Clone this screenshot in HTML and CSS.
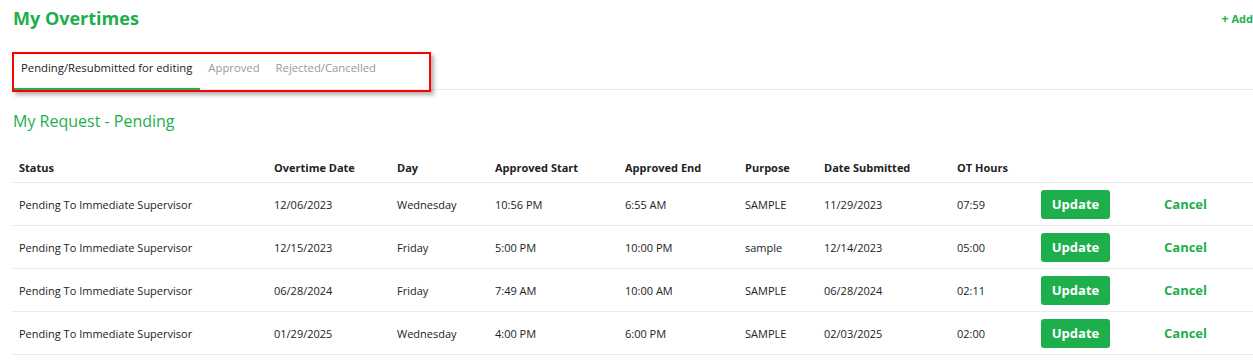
FILE: index.html
```html
<!DOCTYPE html>
<html lang="en">
<head>
  <meta charset="UTF-8">
  <title>My Overtimes</title>
  <meta name="viewport" content="width=device-width, initial-scale=1.0">
  <link rel="stylesheet" href="styles.css">
</head>
<body>

  <div class="page-head">
    <h1>My Overtimes</h1>
    <a class="add-link" href="#"><span class="plus">+</span> Add</a>
  </div>

  <div class="tabs-row">
    <div class="tabs-box">
      <a class="tab active" href="#">Pending/Resubmitted for editing</a>
      <a class="tab" href="#">Approved</a>
      <a class="tab" href="#">Rejected/Cancelled</a>
    </div>
  </div>

  <h2>My Request - Pending</h2>

  <table class="ot-table">
    <colgroup>
      <col style="width:255px">
      <col style="width:123px">
      <col style="width:98px">
      <col style="width:130px">
      <col style="width:120px">
      <col style="width:79px">
      <col style="width:133px">
      <col style="width:84px">
      <col style="width:123px">
      <col>
    </colgroup>
    <thead>
      <tr>
        <th>Status</th>
        <th>Overtime Date</th>
        <th>Day</th>
        <th>Approved Start</th>
        <th>Approved End</th>
        <th>Purpose</th>
        <th>Date Submitted</th>
        <th>OT Hours</th>
        <th></th>
        <th></th>
      </tr>
    </thead>
    <tbody>
      <tr>
        <td>Pending To Immediate Supervisor</td>
        <td>12/06/2023</td>
        <td>Wednesday</td>
        <td>10:56 PM</td>
        <td>6:55 AM</td>
        <td>SAMPLE</td>
        <td>11/29/2023</td>
        <td>07:59</td>
        <td><button class="btn-update">Update</button></td>
        <td><a class="cancel" href="#">Cancel</a></td>
      </tr>
      <tr>
        <td>Pending To Immediate Supervisor</td>
        <td>12/15/2023</td>
        <td>Friday</td>
        <td>5:00 PM</td>
        <td>10:00 PM</td>
        <td>sample</td>
        <td>12/14/2023</td>
        <td>05:00</td>
        <td><button class="btn-update">Update</button></td>
        <td><a class="cancel" href="#">Cancel</a></td>
      </tr>
      <tr>
        <td>Pending To Immediate Supervisor</td>
        <td>06/28/2024</td>
        <td>Friday</td>
        <td>7:49 AM</td>
        <td>10:00 AM</td>
        <td>SAMPLE</td>
        <td>06/28/2024</td>
        <td>02:11</td>
        <td><button class="btn-update">Update</button></td>
        <td><a class="cancel" href="#">Cancel</a></td>
      </tr>
      <tr>
        <td>Pending To Immediate Supervisor</td>
        <td>01/29/2025</td>
        <td>Wednesday</td>
        <td>4:00 PM</td>
        <td>6:00 PM</td>
        <td>SAMPLE</td>
        <td>02/03/2025</td>
        <td>02:00</td>
        <td><button class="btn-update">Update</button></td>
        <td><a class="cancel" href="#">Cancel</a></td>
      </tr>
      <tr>
        <td>Pending To Immediate Supervisor</td>
        <td>02/14/2025</td>
        <td>Friday</td>
        <td>6:00 PM</td>
        <td>9:00 PM</td>
        <td>SAMPLE</td>
        <td>02/10/2025</td>
        <td>03:00</td>
        <td><button class="btn-update">Update</button></td>
        <td><a class="cancel" href="#">Cancel</a></td>
      </tr>
    </tbody>
  </table>

</body>
</html>
```

FILE: styles.css
```css
body {
  margin: 0;
  background: #fff;
  color: #222;
  font-family: 'Open Sans', 'Noto Sans', sans-serif;
  font-size: 11px;
  overflow: hidden;
}
a {
  text-decoration: none;
}
.page-head {
  display: flex;
  justify-content: space-between;
  align-items: flex-start;
  padding: 6px 0 0 13px;
  height: 46px;
}
h1 {
  margin: 0;
  font-size: 18px;
  font-weight: 700;
  color: #1daf4c;
}
.add-link {
  margin-top: 3px;
  font-size: 11px;
  font-weight: 700;
  color: #1daf4c;
}
.plus {
  font-size: 13px;
}
.tabs-row {
  display: flex;
  margin-left: 12px;
  border-bottom: 1px solid #ececec;
  height: 37px;
}
.tabs-box {
  display: flex;
  width: 415px;
  height: 36px;
  border: 2px solid #f00;
  box-shadow: 3px 3px 4px rgba(0, 0, 0, 0.3);
}
.tab {
  display: block;
  padding: 6px 8px 0;
  font-size: 11.3px;
  color: #999;
  border-bottom: 2px solid transparent;
}
.tab:first-child {
  padding-left: 7px;
}
.tab.active {
  color: #222;
  border-bottom-color: #1daf4c;
}
h2 {
  margin: 20px 0 0 13px;
  font-size: 16px;
  font-weight: 400;
  color: #1daf4c;
}
.ot-table {
  margin: 20px 0 0 12px;
  width: 1280px;
  border-collapse: collapse;
  table-layout: fixed;
}
.ot-table th,
.ot-table td {
  text-align: left;
  padding: 0 7px;
  white-space: nowrap;
}
.ot-table th {
  height: 30px;
  font-weight: 700;
  border-bottom: 1px solid #ececec;
}
.ot-table td {
  height: 42px;
  border-bottom: 1px solid #ececec;
}
.btn-update {
  width: 69px;
  height: 29px;
  border: none;
  border-radius: 3px;
  background: #1daf4c;
  color: #fff;
  font-family: inherit;
  font-size: 13px;
  font-weight: 700;
  cursor: pointer;
}
.cancel {
  font-size: 13px;
  font-weight: 700;
  color: #1daf4c;
}
```
